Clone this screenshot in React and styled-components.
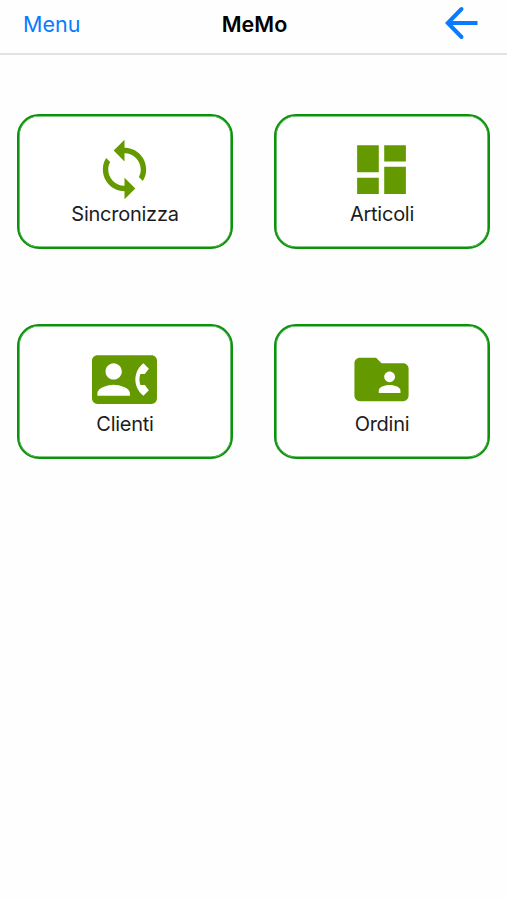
import styled, { createGlobalStyle } from 'styled-components';
import { MdContactPhone, MdDashboard, MdFolderShared, MdSync } from 'react-icons/md';

const GlobalStyle = createGlobalStyle`
    * {
        box-sizing: border-box;
    }

    body {
        margin: 0;
        background: #fff;
        font-family: Inter, Roboto, sans-serif;
    }

    button {
        padding: 0;
        border: 0;
        background: none;
        font: inherit;
        cursor: pointer;
    }
`

const Screen = styled.div`
    min-height: 100vh;
    background: #fefefe;
`

const Header = styled.header`
    display: grid;
    grid-template-columns: 1fr auto 1fr;
    align-items: center;
    height: 55px;
    padding: 0 22px 7px;
    border-bottom: 2px solid #e3e3e3;
`

const MenuButton = styled.button`
    justify-self: start;
    padding: 2px 0 0 1px;
    color: #0a7aff;
    font-size: 21.5px;
    line-height: 28px;
`

const Title = styled.h1`
    margin: 0;
    padding: 2px 0 0 2px;
    color: #000;
    font-size: 21.5px;
    font-weight: 600;
    line-height: 28px;
`

const BackButton = styled.button`
    display: flex;
    justify-self: end;
    margin-right: 7px;
    color: #0a7aff;
`

const Tiles = styled.main`
    display: grid;
    grid-template-columns: 216px 216px;
    justify-content: space-between;
    row-gap: 75px;
    padding: 59px 17px 0;
`

const Tile = styled.button`
    && {
        display: flex;
        flex-direction: column;
        align-items: center;
        height: 135px;
        padding-top: 21px;
        border: 2px solid #0b930b;
        border-radius: 22px;
        background: #fff;
        box-shadow: inset 0 0 0 0.6px #0b930b;
    }

    svg {
        display: block;
        margin-right: 1px;
        color: #649a00;
    }
`

const TileLabel = styled.span`
    color: #1c1c1e;
    font-size: 20px;
    letter-spacing: -0.25px;
    line-height: 25px;
`

const ArrowIcon = () => (
    <svg width="34" height="34" viewBox="0 0 34 34" fill="none" stroke="currentColor" strokeWidth="4">
        <path d="M33.5 17H4" />
        <path d="M17.5 3L3.8 17L17.5 31" strokeLinecap="round" />
    </svg>
)

const TILES = [
    { id: 'sync', label: 'Sincronizza', Icon: MdSync },
    { id: 'items', label: 'Articoli', Icon: MdDashboard },
    { id: 'customers', label: 'Clienti', Icon: MdContactPhone },
    { id: 'orders', label: 'Ordini', Icon: MdFolderShared }
]

const App = () => {
    return <Screen>
        <GlobalStyle />
        <Header>
            <MenuButton type="button">Menu</MenuButton>
            <Title>MeMo</Title>
            <BackButton type="button"><ArrowIcon /></BackButton>
        </Header>
        <Tiles>
            {TILES.map(({ id, label, Icon }) => (
                <Tile key={id} type="button">
                    <Icon size={65} />
                    <TileLabel>{label}</TileLabel>
                </Tile>
            ))}
        </Tiles>
    </Screen>
}

export default App;
